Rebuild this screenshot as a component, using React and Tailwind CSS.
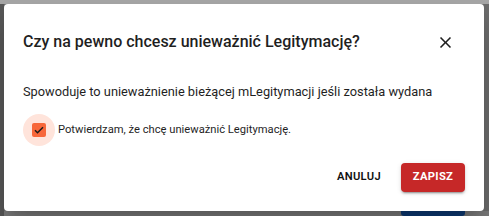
import { useState } from 'react';

export default function App() {
  const [checked, setChecked] = useState(true);

  return (
    <div className="w-[489px] h-[216px] overflow-hidden bg-[#6e6e6e] flex flex-col" style={{ fontFamily: 'Roboto, "Liberation Sans", sans-serif' }}>
      <div className="h-[4px] bg-[#a6a6a6] shrink-0" />
      <div className="flex h-[207px] shrink-0">
        <div className="w-[4px] bg-[#575757]" />
        {/* dialog */}
        <div className="w-[480px] bg-white rounded-[4px] shadow-[0_11px_15px_-7px_rgba(0,0,0,0.2),0_24px_38px_3px_rgba(0,0,0,0.14)] flex flex-col relative z-10">
          <div className="flex items-center justify-between pl-[19px] pr-[29px] pt-[25px]">
            <h2 className="text-[16px] font-medium text-[#1f1f1f] leading-[26px]">Czy na pewno chcesz unieważnić Legitymację?</h2>
            <button className="text-[#1f1f1f]">
              <svg width="19" height="19" viewBox="0 0 24 24" fill="currentColor">
                <path d="M19 6.41L17.59 5 12 10.59 6.41 5 5 6.41 10.59 12 5 17.59 6.41 19 12 13.41 17.59 19 19 17.59 13.41 12z" />
              </svg>
            </button>
          </div>
          <p className="pl-[19px] mt-[27px] text-[12.8px] text-[#1f1f1f] leading-[20px]">Spowoduje to unieważnienie bieżącej mLegitymacji jeśli została wydana</p>
          <label className="flex items-center pl-[19px] mt-[12px] cursor-pointer">
            <span className="w-[32px] h-[32px] rounded-full bg-[#ffe4db] flex items-center justify-center shrink-0">
              <input type="checkbox" className="hidden" checked={checked} onChange={() => setChecked(!checked)} />
              <span className="w-[14px] h-[14px] rounded-[2px] bg-[#f7673a] flex items-center justify-center">
                {checked && (
                  <svg width="12" height="12" viewBox="0 0 24 24" fill="none" stroke="#1a1a1a" strokeWidth="3">
                    <path d="M4 12.5l5 5L20 6.5" />
                  </svg>
                )}
              </span>
            </span>
            <span className="ml-[3px] text-[11.2px] text-[#1f1f1f]">Potwierdzam, że chcę unieważnić Legitymację.</span>
          </label>
          <div className="flex items-center justify-end gap-[17px] pr-[19px] mt-auto mb-[19px]">
            <button className="text-[11.2px] font-semibold text-[#111] tracking-[0.32px] px-[3px]">ANULUJ</button>
            <button className="w-[64px] h-[29px] rounded-[4px] bg-[#c62828] text-white text-[11.2px] font-bold tracking-[0.32px] shadow-[0_3px_1px_-2px_rgba(0,0,0,0.2),0_2px_2px_0_rgba(0,0,0,0.14),0_1px_5px_0_rgba(0,0,0,0.12)]">ZAPISZ</button>
          </div>
        </div>
        <div className="flex-1 bg-[#6b6b6b]" />
      </div>
      <div className="flex-1 bg-[#7b7b7b] flex">
        <div className="w-[4px] bg-[#575757]" />
        <div className="ml-[397px] w-[64px] h-[5px] bg-[#0d3a75] rounded-b-[3px]" />
      </div>
    </div>
  );
}
